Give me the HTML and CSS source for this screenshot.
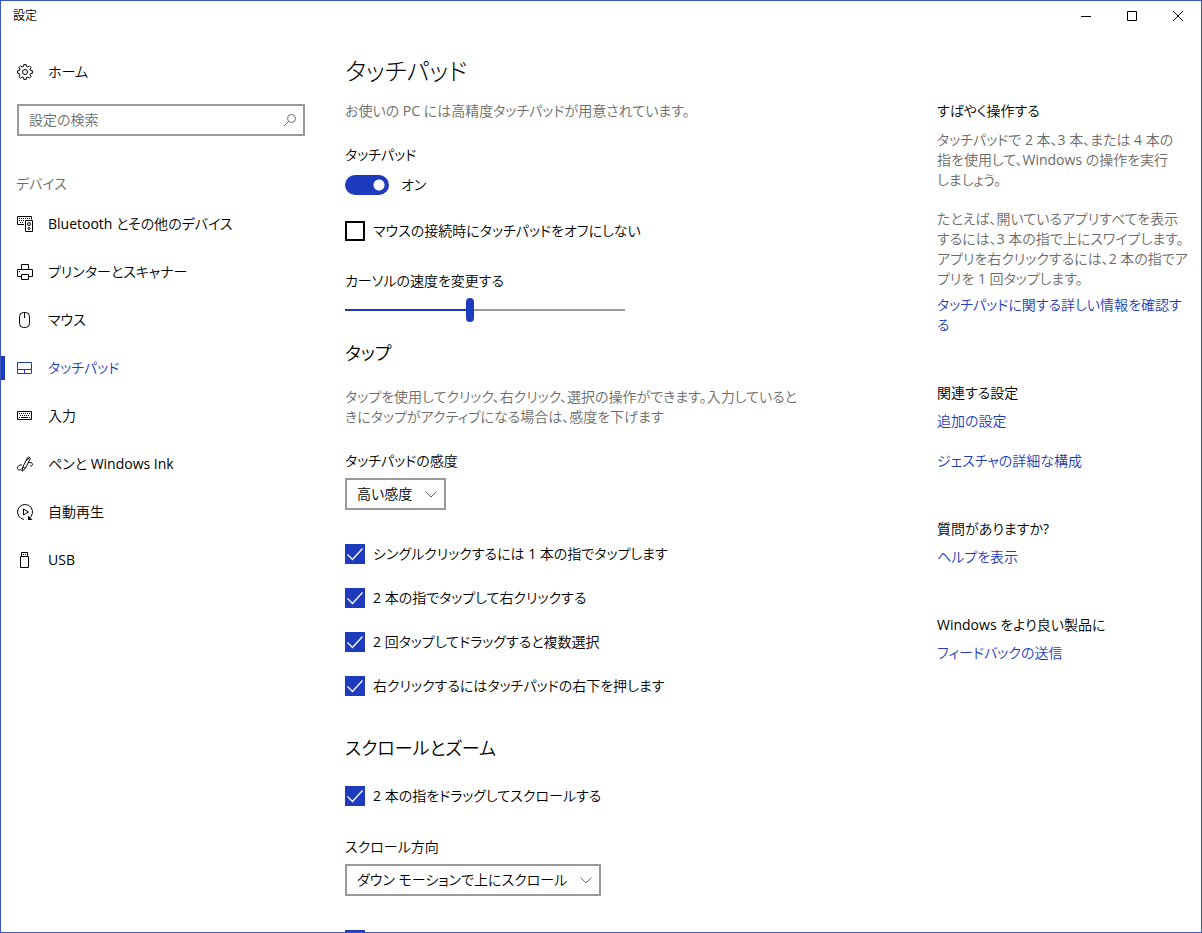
FILE: index.html
```html
<!DOCTYPE html>
<html lang="ja">
<head>
  <meta charset="UTF-8" />
  <meta name="viewport" content="width=device-width, initial-scale=1.0" />
  <title>設定</title>
  <link rel="stylesheet" href="styles.css">
</head>
<body>
  <div class="window">
    <header class="titlebar">
      <span class="titlebar-text">設定</span>
      <div class="window-buttons">
        <button type="button" aria-label="最小化">
          <svg width="10" height="10" viewBox="0 0 10 10"><path d="M0 5.5h10" /></svg>
        </button>
        <button type="button" aria-label="最大化">
          <svg width="10" height="10" viewBox="0 0 10 10"><path d="M.5.5h9v9h-9z" /></svg>
        </button>
        <button type="button" aria-label="閉じる">
          <svg width="10" height="10" viewBox="0 0 10 10"><path d="M0 0l10 10M10 0L0 10" /></svg>
        </button>
      </div>
    </header>

    <div class="layout">
      <nav class="sidebar">
        <a href="#" class="nav-item">
          <svg class="icon" viewBox="0 0 16 16"><path d="M6.8.6h2.4l.4 1.9 1.3.5 1.6-1.1 1.6 1.6L13 5.1l.5 1.3 1.9.4v2.4l-1.9.4-.5 1.3 1.1 1.6-1.6 1.6-1.6-1.1-1.3.5-.4 1.9H6.8l-.4-1.9-1.3-.5-1.6 1.1-1.6-1.6L3 10.9l-.5-1.3-1.9-.4V6.8l1.9-.4L3 5.1 1.9 3.5l1.6-1.6L5.1 3l1.3-.5z" /><circle cx="8" cy="8" r="2.5" /></svg>
          <span>ホーム</span>
        </a>

        <div class="search">
          <input type="text" placeholder="設定の検索" aria-label="設定の検索" />
          <svg class="search-icon" viewBox="0 0 14 14"><circle cx="8.5" cy="5.5" r="4" /><path d="M5.5 8.5L1 13" /></svg>
        </div>

        <h2 class="nav-title">デバイス</h2>

        <a href="#" class="nav-item">
          <svg class="icon" viewBox="0 0 16 16"><path d="M7 8.5H.5v-8h14v3M8.5 4.5h7v11h-7z" /><path d="M2 2.5h11M2 4.5h5M3 6.5h4" stroke-dasharray="1 1" /><circle cx="12" cy="8" r="1.5" /><circle cx="12" cy="12.5" r="1" /></svg>
          <span>Bluetooth とその他のデバイス</span>
        </a>
        <a href="#" class="nav-item">
          <svg class="icon" viewBox="0 0 16 16"><path d="M4.5 5.5v-5h7v5M4.5 12.5h-4v-7h15v7h-4M4.5 10.5h7v5h-7zM2 7.5h1" /></svg>
          <span>プリンターとスキャナー</span>
        </a>
        <a href="#" class="nav-item">
          <svg class="icon" viewBox="0 0 16 16"><rect x="2.5" y=".5" width="10" height="15" rx="4" /><path d="M7.5 1v5" /></svg>
          <span>マウス</span>
        </a>
        <a href="#" class="nav-item active" aria-current="page">
          <svg class="icon" viewBox="0 0 16 16"><path d="M.5 2.5h14v11H.5zM.5 9.5h14M7.5 9.5v4" /></svg>
          <span>タッチパッド</span>
        </a>
        <a href="#" class="nav-item">
          <svg class="icon" viewBox="0 0 16 16"><path d="M.5 3.5h14v8H.5z" /><path d="M2 5.5h11M3 7.5h10" stroke-dasharray="1 1" /><path d="M2 9.5h1M4 9.5h7M12 9.5h1" /></svg>
          <span>入力</span>
        </a>
        <a href="#" class="nav-item">
          <svg class="icon" viewBox="0 0 16 16"><path d="M5 15.300l.7-4L10.500 1.700c.7-1.400 3.300-.3 2.600 1.200L8.300 12.500zM6 11l2.300 1.300M9.500 4L13 1.500M5 9C2.500 8.500.5 10 .5 12S2.500 15 4.500 13M11.500 6.800c2-.8 4 0 4 1.500s-1.500 2-2.500 1.500" /></svg>
          <span>ペンと Windows Ink</span>
        </a>
        <a href="#" class="nav-item">
          <svg class="icon" viewBox="0 0 16 16"><path d="M7 15.400A7.500 7.500 0 1 1 14 12.500l-2.500 2.500M6.500 5v6l5-3z" /><path d="M11 11.500v4.500h4.500z" fill="currentColor" stroke="none" /></svg>
          <span>自動再生</span>
        </a>
        <a href="#" class="nav-item">
          <svg class="icon" viewBox="0 0 16 16"><path d="M4.5 4.5v-4h6v4M3.5 4.5h8v11h-8zM6 2.5h1M8 2.5h1" /></svg>
          <span>USB</span>
        </a>
      </nav>

      <main class="content">
        <h1>タッチパッド</h1>
        <p class="intro">お使いの PC には高精度タッチパッドが用意されています。</p>

        <label class="field-label" for="touchpad">タッチパッド</label>
        <div class="toggle-row">
          <input type="checkbox" role="switch" class="toggle" id="touchpad" checked />
          <span>オン</span>
        </div>

        <label class="check mouse-check"><input type="checkbox" />マウスの接続時にタッチパッドをオフにしない</label>

        <label class="field-label" for="speed">カーソルの速度を変更する</label>
        <input type="range" class="slider" id="speed" min="1" max="10" value="5" />

        <h2 class="tap-title">タップ</h2>
        <p class="tap-text">タップを使用してクリック、右クリック、選択の操作ができます。入力していると<br />きにタップがアクティブになる場合は、感度を下げます</p>

        <label class="field-label" for="sensitivity">タッチパッドの感度</label>
        <div class="dropdown">
          <select id="sensitivity"><option>高い感度</option></select>
          <svg class="chevron" viewBox="0 0 12 7"><path d="M.5.5L6 6 11.5.5" /></svg>
        </div>

        <div class="check-list">
          <label class="check"><input type="checkbox" checked />シングルクリックするには 1 本の指でタップします</label>
          <label class="check"><input type="checkbox" checked />2 本の指でタップして右クリックする</label>
          <label class="check"><input type="checkbox" checked />2 回タップしてドラッグすると複数選択</label>
          <label class="check"><input type="checkbox" checked />右クリックするにはタッチパッドの右下を押します</label>
        </div>

        <h2 class="scroll-title">スクロールとズーム</h2>
        <label class="check scroll-check"><input type="checkbox" checked />2 本の指をドラッグしてスクロールする</label>

        <label class="field-label" for="direction">スクロール方向</label>
        <div class="dropdown">
          <select id="direction"><option>ダウン モーションで上にスクロール</option></select>
          <svg class="chevron" viewBox="0 0 12 7"><path d="M.5.5L6 6 11.5.5" /></svg>
        </div>

        <div class="check-list">
          <label class="check"><input type="checkbox" aria-label="ズーム" checked /></label>
        </div>
      </main>

      <aside class="help">
        <section>
          <h3>すばやく操作する</h3>
          <p>タッチパッドで 2 本、3 本、または 4 本の<br />指を使用して、Windows の操作を実行<br />しましょう。</p>
          <p>たとえば、開いているアプリすべてを表示<br />するには、3 本の指で上にスワイプします。<br />アプリを右クリックするには、2 本の指でア<br />プリを 1 回タップします。</p>
          <a href="#" class="more">タッチパッドに関する詳しい情報を確認す<br />る</a>
        </section>
        <section>
          <h3>関連する設定</h3>
          <a href="#">追加の設定</a>
          <a href="#">ジェスチャの詳細な構成</a>
        </section>
        <section>
          <h3>質問がありますか?</h3>
          <a href="#">ヘルプを表示</a>
        </section>
        <section>
          <h3>Windows をより良い製品に</h3>
          <a href="#">フィードバックの送信</a>
        </section>
      </aside>
    </div>
  </div>
</body>
</html>
```

FILE: styles.css
```css
:root {
  --accent: #1f3bbd;
  --border: #999;
  --muted: #6b6b6b;
}

* {
  box-sizing: border-box;
  margin: 0;
  padding: 0;
}

body {
  background: #fff;
  color: #000;
  font-family: "Open Sans", "Noto Sans CJK JP DemiLight", "Noto Sans CJK JP", sans-serif;
  font-size: 14px;
  font-feature-settings: "palt";
  line-height: 20px;
}

input,
select,
button {
  font: inherit;
  font-feature-settings: inherit;
  color: inherit;
}

svg {
  fill: none;
  stroke: currentColor;
}

a {
  color: var(--accent);
  text-decoration: none;
}

.window {
  display: flex;
  flex-direction: column;
  height: 100vh;
  border: 1px solid #3c55c5;
  overflow: hidden;
}

/* title bar */
.titlebar {
  display: flex;
  justify-content: space-between;
  align-items: center;
  height: 30px;
  padding-left: 12px;
  flex-shrink: 0;
}

.titlebar-text {
  font-size: 12px;
}

.window-buttons {
  display: flex;
}

.window-buttons button {
  display: flex;
  align-items: center;
  justify-content: center;
  width: 46px;
  height: 30px;
  background: none;
  border: none;
}

/* columns */
.layout {
  display: grid;
  grid-template-columns: 304px minmax(0, 1fr) 240px;
  flex: 1;
  min-height: 0;
  padding-right: 24px;
}

.sidebar {
  padding-top: 17px;
}

.nav-item {
  display: flex;
  align-items: center;
  gap: 15px;
  height: 48px;
  padding-left: 16px;
  color: #000;
}

.nav-item.active {
  color: var(--accent);
  background: linear-gradient(var(--accent), var(--accent)) left center / 4px 24px no-repeat;
}

.icon {
  width: 16px;
  height: 16px;
  flex-shrink: 0;
}

.search {
  position: relative;
  margin: 8px 0 0 16px;
}

.search input {
  display: block;
  width: 100%;
  height: 32px;
  padding: 0 32px 2px 10px;
  border: 2px solid var(--border);
}

.search input::placeholder {
  color: var(--muted);
}

.search-icon {
  position: absolute;
  top: 9px;
  right: 8px;
  width: 14px;
  height: 14px;
  color: var(--muted);
}

.nav-title {
  margin: 38px 0 6px 15px;
  font-size: 14px;
  font-weight: 400;
  color: var(--muted);
}

/* main column */
.content {
  padding: 19px 40px 0;
  overflow-y: auto;
  scrollbar-width: none;
}

h1 {
  font-family: "Noto Sans CJK JP", sans-serif;
  font-size: 24px;
  font-weight: 300;
  line-height: 40px;
}

.content h2 {
  font-size: 18px;
  font-weight: 400;
  line-height: 28px;
}

.content p {
  color: var(--muted);
}

.intro {
  margin: 11px 0 24px;
}

.field-label {
  display: block;
}

.toggle-row {
  display: flex;
  align-items: center;
  gap: 12px;
  margin-top: 10px;
}

.toggle {
  appearance: none;
  width: 44px;
  height: 20px;
  border-radius: 10px;
  background: #999;
}

.toggle:checked {
  background: radial-gradient(circle at 34px 10px, #fff 5px, var(--accent) 6px);
}

.check {
  display: flex;
  align-items: center;
  gap: 8px;
  min-height: 20px;
}

.check input {
  appearance: none;
  width: 20px;
  height: 20px;
  border: 2px solid #000;
  flex-shrink: 0;
}

.check input:checked {
  border: none;
  background: var(--accent) url("data:image/svg+xml,%3Csvg xmlns='http://www.w3.org/2000/svg' viewBox='0 0 20 20'%3E%3Cpath d='M2.5 10.5L7.5 15.5 17.5 4.5' fill='none' stroke='white' stroke-width='1.3'/%3E%3C/svg%3E");
}

.mouse-check {
  margin: 26px 0 30px;
}

.slider {
  appearance: none;
  display: block;
  width: 280px;
  max-width: 100%;
  height: 24px;
  margin-top: 7px;
  background: linear-gradient(to right, var(--accent) 45%, var(--border) 45%) center / 100% 2px no-repeat;
}

.slider::-webkit-slider-thumb {
  appearance: none;
  width: 8px;
  height: 24px;
  border-radius: 4px;
  background: var(--accent);
}

.tap-title {
  margin-top: 17px;
}

.tap-text {
  margin: 20px 0 24px;
  white-space: nowrap;
}

.dropdown {
  position: relative;
  width: fit-content;
  margin-top: 7px;
}

.dropdown select {
  appearance: none;
  display: block;
  height: 32px;
  padding: 0 31px 0 10px;
  border: 2px solid var(--border);
  border-radius: 0;
  background: #fff;
}

.chevron {
  position: absolute;
  top: 13px;
  right: 9px;
  width: 12px;
  height: 7px;
  color: #666;
  pointer-events: none;
}

.check-list {
  display: flex;
  flex-direction: column;
  gap: 24px;
  margin-top: 34px;
}

.scroll-title {
  margin-top: 38px;
}

.scroll-check {
  margin: 24px 0 31px;
}

/* right column */
.help {
  padding-top: 70px;
  white-space: nowrap;
}

.help section {
  display: flex;
  flex-direction: column;
  align-items: flex-start;
  margin-bottom: 48px;
}

.help h3 {
  font-size: 14px;
  font-weight: 400;
}

.help p {
  margin: 9px 0 10px;
  color: var(--muted);
}

.help a {
  margin-top: 8px;
}

.help a + a {
  margin-top: 20px;
}

.help .more {
  margin-top: -4px;
}
```
